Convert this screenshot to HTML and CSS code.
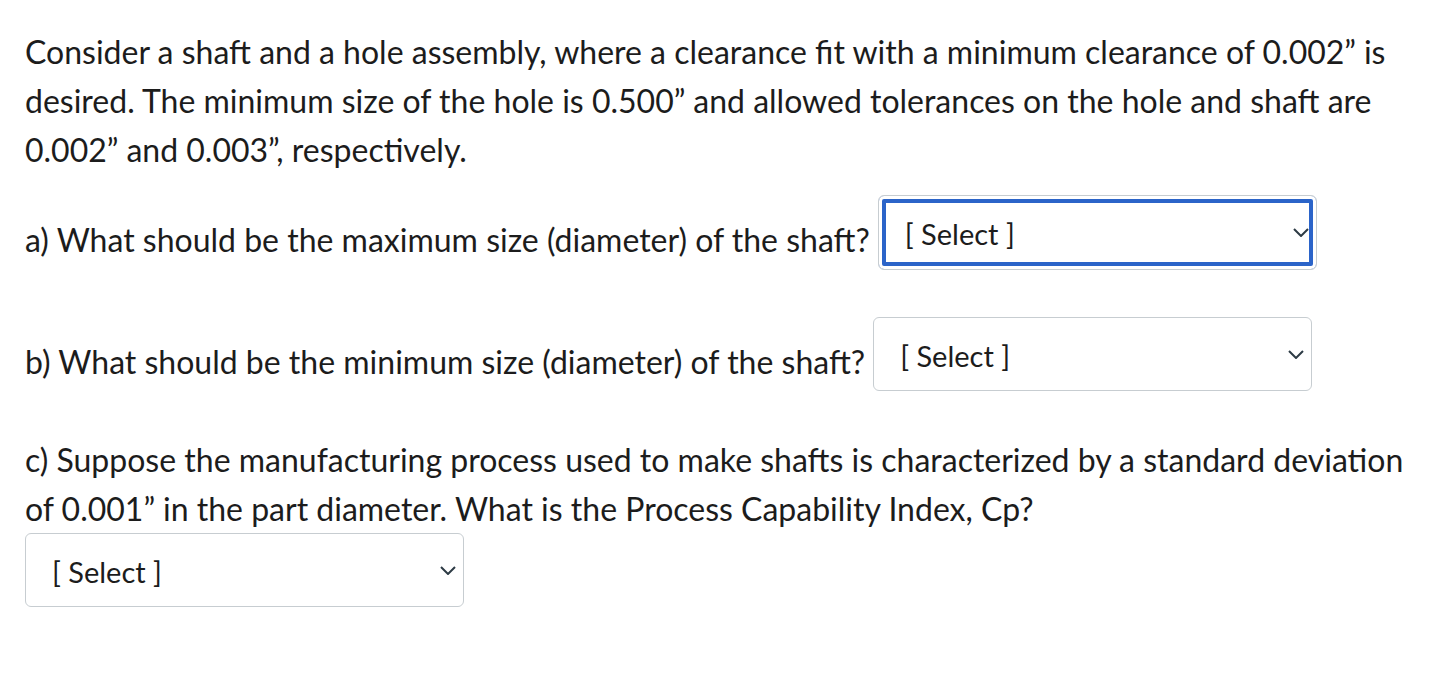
FILE: index.html
```html
<!DOCTYPE html>
<html>
<head>
<meta charset="utf-8">
<link rel="stylesheet" href="styles.css">
</head>
<body>
<div class="question">
  <p class="intro">Consider a shaft and a hole assembly, where a clearance fit with a minimum clearance of 0.002” is desired. The minimum size of the hole is 0.500” and allowed tolerances on the hole and shaft are 0.002” and 0.003”, respectively.</p>
  <div class="row row-a">
    <span class="label">a) What should be the maximum size (diameter) of the shaft?</span>
    <div class="select focused"><span class="select-text">[ Select ]</span><svg class="chev" viewBox="0 0 16 9" width="16" height="9"><path d="M1 1 L8 8 L15 1" fill="none" stroke="#2d3b45" stroke-width="2"/></svg></div>
  </div>
  <div class="row row-b">
    <span class="label">b) What should be the minimum size (diameter) of the shaft?</span>
    <div class="select"><span class="select-text">[ Select ]</span><svg class="chev" viewBox="0 0 16 9" width="16" height="9"><path d="M1 1 L8 8 L15 1" fill="none" stroke="#2d3b45" stroke-width="2"/></svg></div>
  </div>
  <p class="part-c">c) Suppose the manufacturing process used to make shafts is characterized by a standard deviation of 0.001” in the part diameter. What is the Process Capability Index, Cp?</p>
  <div class="select"><span class="select-text">[ Select ]</span><svg class="chev" viewBox="0 0 16 9" width="16" height="9"><path d="M1 1 L8 8 L15 1" fill="none" stroke="#2d3b45" stroke-width="2"/></svg></div>
</div>
</body>
</html>
```

FILE: styles.css
```css
html, body {
  margin: 0;
  padding: 0;
  background: #ffffff;
}
body {
  font-family: Lato, "Noto Sans", sans-serif;
  color: #1c1c1c;
  font-size: 32px;
  line-height: 49px;
}
.question {
  padding: 27px 20px 0 25px;
}
p {
  margin: 0;
}
.row {
  display: flex;
  align-items: center;
  gap: 8px;
}
.row-a {
  margin-top: 21px;
}
.row-b {
  margin-top: 47px;
}
.part-c {
  margin-top: 44px;
}
.label {
  position: relative;
  top: 7px;
}
.select {
  box-sizing: border-box;
  width: 439px;
  height: 74px;
  border: 1px solid #c7cdd1;
  border-radius: 6px;
  display: flex;
  align-items: center;
  justify-content: space-between;
  padding: 0 7px 0 26px;
  background: #fff;
}
.select.focused {
  height: 75px;
  box-shadow: inset 0 0 0 3px #fff, inset 0 0 0 7px #2b64c9;
}
.select-text {
  font-size: 29px;
  line-height: 1;
  position: relative;
  top: 1px;
}
.chev {
  display: block;
}
```
